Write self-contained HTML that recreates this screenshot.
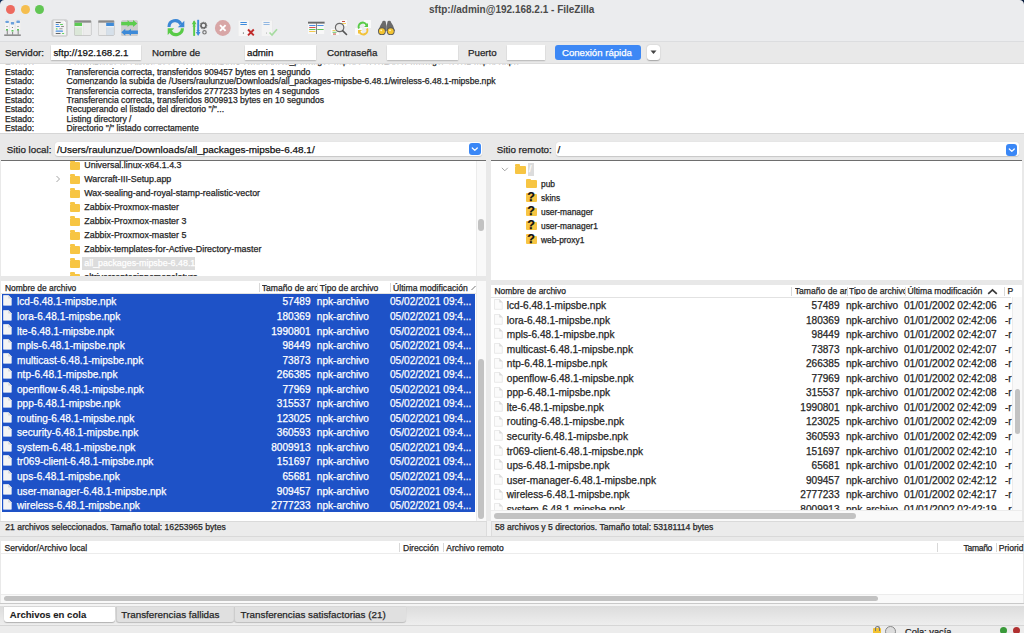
<!DOCTYPE html>
<html><head><meta charset="utf-8">
<style>
*{margin:0;padding:0;box-sizing:border-box}
html,body{width:1024px;height:633px;overflow:hidden;background:#e9e9e9;font-family:"Liberation Sans",sans-serif;color:#262626;position:relative}
div,span,svg{position:absolute}
.t{white-space:nowrap;line-height:1;-webkit-text-stroke:0.25px currentColor}
.w{background:#fff}
.tl{width:9px;height:9px;border-radius:50%;top:5px}
.inp{background:#fff;height:15px;top:45px;box-shadow:0 0.5px 1.2px rgba(0,0,0,.22)}
.lg{font-size:8.6px;line-height:9.45px;white-space:nowrap;-webkit-text-stroke:0.25px currentColor}
.tr{font-size:8.9px;white-space:nowrap;line-height:1;-webkit-text-stroke:0.25px currentColor}
.fold{width:11px;height:8px;background:#f7c543;border-radius:1px}
.fold:before{content:"";position:absolute;left:0;top:-1.5px;width:5px;height:2px;background:#f7c543;border-radius:1px 1px 0 0}
.hdr{font-size:8.6px;white-space:nowrap;line-height:1}
.hs{width:1px;height:9px;background:#d8d8d8}
.fl{font-size:10.1px;white-space:nowrap;line-height:1;-webkit-text-stroke:0.25px currentColor}
.fi{width:8px;height:10px}
.sel{color:#fff}
</style></head><body>

<div style="left:0;top:0;width:1024px;height:42px;background:#ebecee"></div>
<div style="left:0;top:41px;width:1024px;height:1px;background:#dcdddf"></div>
<svg style="left:0;top:0" width="6" height="6"><path d="M0 0 H4.5 A4.5 4.5 0 0 0 0 4.5 Z" fill="#12305a"/></svg>
<svg style="left:1018px;top:0" width="6" height="6"><path d="M6 0 H1.5 A4.5 4.5 0 0 1 6 4.5 Z" fill="#0a1e3e"/></svg>
<div class="tl" style="left:5.8px;top:4.8px;background:#ed6a5f"></div>
<div class="tl" style="left:20.5px;background:#f5be4f"></div>
<div class="tl" style="left:35px;background:#62c654"></div>
<div class="t" style="left:429px;top:5px;font-size:10px;font-weight:bold;color:#4a4a4a;-webkit-text-stroke:0">sftp://admin@192.168.2.1 - FileZilla</div>
<svg style="left:0;top:0" width="420" height="42" viewBox="0 0 420 42">
<defs>
<filter id="sh" x="-20%" y="-20%" width="140%" height="140%"><feGaussianBlur in="SourceAlpha" stdDeviation="0.6"/><feOffset dy="0.3"/><feComponentTransfer><feFuncA type="linear" slope="0.25"/></feComponentTransfer><feMerge><feMergeNode/><feMergeNode in="SourceGraphic"/></feMerge></filter>
</defs>
<!-- site manager -->
<g filter="url(#sh)">
<rect x="4.3" y="19.8" width="4.9" height="10.7" fill="#f4f4f4" rx="0.6"/>
<rect x="15.6" y="19.6" width="5.2" height="10.9" fill="#f4f4f4" rx="0.6"/>
<rect x="9.9" y="21.2" width="4.8" height="10.8" fill="#f6f6f6" rx="0.6"/>
</g>
<rect x="5.5" y="20.7" width="3.3" height="2.4" fill="#6aa0dc" rx="0.5"/>
<rect x="16.4" y="20.5" width="3.5" height="2.4" fill="#6aa0dc" rx="0.5"/>
<rect x="10.8" y="22" width="3.3" height="2.4" fill="#6aa0dc" rx="0.5"/>
<circle cx="7" cy="26.5" r="0.5" fill="#555"/><circle cx="12.4" cy="27.5" r="0.5" fill="#555"/><circle cx="18" cy="26.5" r="0.5" fill="#555"/>
<rect x="6" y="29" width="2" height="1.6" fill="#5cc45a"/><rect x="11.5" y="30" width="2" height="1.6" fill="#5cc45a"/><rect x="17" y="29" width="2" height="1.6" fill="#5cc45a"/>
<rect x="6.8" y="30.5" width="0.9" height="4" fill="#777"/><rect x="12.2" y="32" width="0.9" height="2.6" fill="#777"/><rect x="17.7" y="30.5" width="0.9" height="4" fill="#777"/>
<rect x="4.2" y="34.5" width="16.6" height="1.3" fill="#777"/>

<!-- message log doc -->
<g filter="url(#sh)"><rect x="51.6" y="19.4" width="16" height="17" rx="1.6" fill="#cfcfcf"/></g>
<path d="M53.5 20.6 H63.8 L66 22.8 V35.3 H53.5 Z" fill="#f3f3f3"/>
<path d="M63.6 20.6 L66 23 H63.6 Z" fill="#fff"/>
<rect x="55.6" y="21.9" width="5.2" height="1" rx="0.5" fill="#666"/>
<rect x="55.6" y="24" width="3.3" height="1" rx="0.5" fill="#4a90e2"/><rect x="60" y="24" width="3" height="1" rx="0.5" fill="#5cd05a"/>
<rect x="55.6" y="26.1" width="4.3" height="1" rx="0.5" fill="#4a90e2"/><rect x="61" y="26.1" width="3" height="1" rx="0.5" fill="#888"/>
<rect x="55.9" y="28.3" width="1.7" height="1.1" rx="0.5" fill="#5cd05a"/><rect x="59.2" y="28.3" width="3.5" height="1" rx="0.5" fill="#999"/>
<rect x="55.6" y="30.6" width="7.4" height="1.1" rx="0.5" fill="#4a90e2"/>
<rect x="55.6" y="32.9" width="5" height="1" rx="0.5" fill="#666"/><rect x="62" y="32.9" width="2.2" height="1" rx="0.5" fill="#5cd05a"/>

<!-- local tree -->
<g filter="url(#sh)"><rect x="74.1" y="20.2" width="17.3" height="15.5" rx="1.4" fill="#bdbdbd"/></g>
<rect x="74.6" y="20.6" width="16.3" height="2.1" fill="#8a8a8a"/>
<rect x="74.6" y="22.8" width="7.6" height="12.4" fill="#dbe7d8"/>
<rect x="74.6" y="22.8" width="7.6" height="3.2" fill="#5ccb52"/>
<rect x="74.6" y="26" width="7.6" height="1.4" fill="#eef3ee"/>
<rect x="82.2" y="22.8" width="0.9" height="12.4" fill="#fafafa"/>
<rect x="83.1" y="22.8" width="7.8" height="12.4" fill="#ececec"/>

<!-- remote tree -->
<g filter="url(#sh)"><rect x="98" y="20.2" width="16.4" height="15.5" rx="1.4" fill="#bdbdbd"/></g>
<rect x="98.5" y="20.6" width="15.4" height="2.1" fill="#8a8a8a"/>
<rect x="98.5" y="22.8" width="6.8" height="12.4" fill="#ececec"/>
<rect x="105.3" y="22.8" width="0.9" height="12.4" fill="#fafafa"/>
<rect x="106.2" y="22.8" width="7.7" height="12.4" fill="#d6e0ea"/>
<rect x="106.2" y="22.8" width="7.7" height="3.2" fill="#3f8bd8"/>
<rect x="106.2" y="26" width="7.7" height="1.4" fill="#eef1f4"/>

<!-- sync browse arrows -->
<g filter="url(#sh)"><rect x="121.2" y="20.2" width="16.6" height="15.8" rx="1.6" fill="#cdcdcd"/></g>
<rect x="121.2" y="21.9" width="13" height="3.4" fill="#5ccd4e"/>
<path d="M127.6 20.1 L131 23.6 L127.6 27.1 Z M133 20.1 L137.4 23.6 L133 27.1 Z" fill="#5ccd4e"/>
<rect x="125" y="30.5" width="12.9" height="3.5" fill="#3d8ad8"/>
<path d="M125.3 28.8 L121.3 32.25 L125.3 35.75 Z M131 28.8 L127 32.25 L131 35.75 Z" fill="#3d8ad8"/>
<!-- refresh -->
<path d="M169 27 A6.3 6.3 0 0 1 181 24.3" stroke="#3a87d6" stroke-width="3.1" fill="none"/>
<path d="M184.3 20.8 L184.3 27.3 L177.8 27.3 Z" fill="#3a87d6"/>
<path d="M182.4 28.3 A6.3 6.3 0 0 1 170.5 31.2" stroke="#59cb48" stroke-width="3.1" fill="none"/>
<path d="M167.7 35 L167.7 28.3 L174.2 28.3 Z" fill="#59cb48"/>

<!-- filter -->
<rect x="193.2" y="21.3" width="1.9" height="14.6" fill="#59cb48"/>
<path d="M191.8 24.2 L194.15 20.2 L196.5 24.2 Z" fill="#59cb48"/>
<path d="M192.3 26.4 L194.15 24.3 L196 26.4 Z" fill="#59cb48"/>
<rect x="197.2" y="19.8" width="1.9" height="14.4" fill="#3f8bdc"/>
<path d="M195.8 32 L198.15 36 L200.5 32 Z" fill="#3f8bdc"/>
<path d="M196.3 30 L198.15 32 L200 30 Z" fill="#3f8bdc"/>
<circle cx="203.5" cy="25.5" r="2.4" fill="none" stroke="#666" stroke-width="1.4"/>
<circle cx="203.5" cy="25.5" r="3.2" fill="none" stroke="#666" stroke-width="1.1" stroke-dasharray="0.9 0.7"/>
<circle cx="204.5" cy="32.3" r="1.7" fill="none" stroke="#777" stroke-width="1.2"/>

<!-- cancel -->
<circle cx="222.8" cy="28" r="7.9" fill="#d8a6a6"/>
<path d="M220 25.2 L225.6 30.8 M225.6 25.2 L220 30.8" stroke="#fff" stroke-width="1.9"/>

<!-- disconnect -->
<g filter="url(#sh)"><rect x="238.2" y="20.2" width="11.3" height="15.8" fill="#f7f7f7"/></g>
<rect x="240.2" y="22.1" width="6.8" height="0.9" rx="0.4" fill="#3d8bdc"/>
<rect x="240.2" y="24.1" width="6.8" height="0.9" rx="0.4" fill="#3d8bdc"/>
<circle cx="243.4" cy="33" r="0.6" fill="#333"/>
<path d="M248 29.5 L253.8 35.3 M253.8 29.5 L248 35.3" stroke="#c02a2a" stroke-width="1.9"/>

<!-- reconnect -->
<g filter="url(#sh)"><rect x="261.2" y="20.2" width="11.3" height="15.8" fill="#f4f4f4"/></g>
<rect x="263.3" y="22.1" width="6.5" height="0.8" rx="0.4" fill="#93b8e2"/>
<rect x="263.3" y="24.1" width="6.5" height="0.8" rx="0.4" fill="#93b8e2"/>
<circle cx="266.5" cy="33" r="0.5" fill="#999"/>
<path d="M269.5 32.5 L272 35 L277 29.2" stroke="#a6dba0" stroke-width="1.7" fill="none"/>

<!-- queue -->
<g filter="url(#sh)"><rect x="308" y="21.7" width="16.6" height="12.3" fill="#f8f8f8"/></g>
<rect x="308" y="21.7" width="16.6" height="1.9" fill="#6b6b6b"/>
<rect x="316" y="23.3" width="0.8" height="10.7" fill="#666"/>
<rect x="309.2" y="25" width="6.3" height="1" fill="#4a90e2"/><rect x="317.3" y="25" width="6.3" height="1" fill="#4a90e2"/>
<rect x="309.2" y="27" width="6.3" height="1" fill="#d9534f"/>
<rect x="309.2" y="29" width="6.3" height="1" fill="#5cc45a"/><rect x="317.3" y="29" width="6.3" height="1" fill="#5cc45a"/>
<rect x="309.2" y="31" width="6.3" height="1" fill="#f2c94c"/>

<!-- search -->
<g filter="url(#sh)"><rect x="339.5" y="19.5" width="8" height="6.5" fill="#fafafa"/><rect x="331" y="28.5" width="8" height="6.5" fill="#fafafa"/></g>
<rect x="342" y="21" width="3" height="0.9" fill="#c0392b"/><rect x="342" y="23" width="4" height="0.9" fill="#f2c94c"/>
<rect x="332.5" y="30" width="3" height="0.9" fill="#f2c94c"/><rect x="332.5" y="31.8" width="4" height="0.9" fill="#5cc45a"/><rect x="333" y="33.6" width="3" height="0.9" fill="#c0392b"/>
<circle cx="339.6" cy="27.5" r="4.2" fill="#e9e9e9" stroke="#6a6a6a" stroke-width="1.2"/>
<path d="M342.6 30.6 L346.5 34.5" stroke="#555" stroke-width="1.6" stroke-linecap="round"/>

<!-- sync browsing -->
<g filter="url(#sh)"><rect x="363.5" y="20" width="7.5" height="8" fill="#fafafa"/><rect x="355" y="28" width="7" height="7.5" fill="#fafafa"/></g>
<path d="M359 28.5 A4 4 0 0 1 366.5 25" stroke="#59cb48" stroke-width="2" fill="none"/>
<path d="M368 23 V27 H364 Z" fill="#59cb48"/>
<path d="M367 28.5 A4 4 0 0 1 359.5 32" stroke="#f2c23a" stroke-width="2" fill="none"/>
<path d="M358 34 V30 H362 Z" fill="#f2c23a"/>

<!-- binoculars -->
<path d="M382.2 22.2 Q382.2 20.8 384 20.8 Q385.8 20.8 385.8 22.2 L386.6 26.5 V31 H378.2 L380.3 25.5 Z" fill="#6a6a6a"/>
<path d="M387.4 22.2 Q387.4 20.8 389.2 20.8 Q391 20.8 391 22.2 L393 25.5 L395 31 H386.6 V26.5 Z" fill="#6a6a6a"/>
<circle cx="381.9" cy="31.2" r="3.9" fill="#5a5a5a"/><circle cx="390.7" cy="31.2" r="3.9" fill="#5a5a5a"/>
<circle cx="381.9" cy="31.2" r="3.0" fill="#f4c430"/><circle cx="390.7" cy="31.2" r="3.0" fill="#f4c430"/>
<circle cx="381.2" cy="30.3" r="0.9" fill="#fff6c8"/><circle cx="390" cy="30.3" r="0.9" fill="#fff6c8"/>
</svg>
<div style="left:0;top:63px;width:1024px;height:1px;background:#dcdcdc"></div>
<div class="t" style="left:5px;top:48px;font-size:9.75px;color:#262626;">Servidor:</div>
<div class="inp" style="left:51px;width:90px"></div>
<div class="t" style="left:53.5px;top:48px;font-size:9.7px;color:#111;">sftp://192.168.2.1</div>
<div class="t" style="left:152px;top:48px;font-size:9.75px;color:#262626;">Nombre de</div>
<div class="inp" style="left:245px;width:71px"></div>
<div class="t" style="left:247px;top:48px;font-size:9.7px;color:#111;">admin</div>
<div class="t" style="left:327px;top:48px;font-size:9.75px;color:#262626;">Contraseña</div>
<div class="inp" style="left:387px;width:71px"></div>
<div class="t" style="left:468px;top:48px;font-size:9.75px;color:#262626;">Puerto</div>
<div class="inp" style="left:507px;width:38px"></div>
<div style="left:555px;top:45px;width:86px;height:15px;background:#3d88f5;border-radius:3px"></div>
<div class="t" style="left:562px;top:48px;font-size:9.6px;color:#fff;">Conexión rápida</div>
<div style="left:647px;top:45px;width:13px;height:15px;background:#fff;border-radius:3px;box-shadow:0 0.5px 1.2px rgba(0,0,0,.3)"></div>
<svg style="left:650px;top:50px" width="7" height="5"><path d="M0.5 0.5 L6.5 0.5 L3.5 4 Z" fill="#444"/></svg>
<div class="w" style="left:0;top:64px;width:1024px;height:69px"></div>
<div style="left:0;top:64px;width:1024px;height:69px;overflow:hidden">
<div class="lg" style="left:5px;top:-7.25px;line-height:1">Estado:</div>
<div class="lg" style="left:66.5px;top:-7.25px;line-height:1">Comenzando la subida de /Users/raulunzue/Downloads/all_packages-mipsbe-6.48.1/user-manager-6.48.1-mipsbe.npk</div>
<div class="lg" style="left:5px;top:3.60px;line-height:1">Estado:</div>
<div class="lg" style="left:66.5px;top:3.60px;line-height:1">Transferencia correcta, transferidos 909457 bytes en 1 segundo</div>
<div class="lg" style="left:5px;top:13.05px;line-height:1">Estado:</div>
<div class="lg" style="left:66.5px;top:13.05px;line-height:1">Comenzando la subida de /Users/raulunzue/Downloads/all_packages-mipsbe-6.48.1/wireless-6.48.1-mipsbe.npk</div>
<div class="lg" style="left:5px;top:22.50px;line-height:1">Estado:</div>
<div class="lg" style="left:66.5px;top:22.50px;line-height:1">Transferencia correcta, transferidos 2777233 bytes en 4 segundos</div>
<div class="lg" style="left:5px;top:31.95px;line-height:1">Estado:</div>
<div class="lg" style="left:66.5px;top:31.95px;line-height:1">Transferencia correcta, transferidos 8009913 bytes en 10 segundos</div>
<div class="lg" style="left:5px;top:41.40px;line-height:1">Estado:</div>
<div class="lg" style="left:66.5px;top:41.40px;line-height:1">Recuperando el listado del directorio "/"...</div>
<div class="lg" style="left:5px;top:50.85px;line-height:1">Estado:</div>
<div class="lg" style="left:66.5px;top:50.85px;line-height:1">Listing directory /</div>
<div class="lg" style="left:5px;top:60.30px;line-height:1">Estado:</div>
<div class="lg" style="left:66.5px;top:60.30px;line-height:1">Directorio "/" listado correctamente</div>
</div>
<div style="left:0;top:133px;width:1024px;height:1px;background:#d6d6d6"></div>
<div class="t" style="left:6.8px;top:144.6px;font-size:9.8px;color:#262626;">Sitio local:</div>
<div style="left:55px;top:142.3px;width:427px;height:14px;background:#fff;border-radius:3px;box-shadow:0 0.5px 1px rgba(0,0,0,.15)"></div>
<div class="t" style="left:57px;top:144.6px;font-size:9.97px;color:#111;">/Users/raulunzue/Downloads/all_packages-mipsbe-6.48.1/</div>
<div style="left:469.4px;top:143px;width:11.6px;height:12.3px;background:#3a87f6;border-radius:3px"></div>
<svg style="left:469.4px;top:143px" width="12" height="12"><path d="M3.3 5 L5.8 7.4 L8.3 5" stroke="#fff" stroke-width="1.3" fill="none" stroke-linecap="round" stroke-linejoin="round"/></svg>
<div class="t" style="left:496.8px;top:144.6px;font-size:9.8px;color:#262626;">Sitio remoto:</div>
<div style="left:555.6px;top:142.3px;width:463px;height:14px;background:#fff;border-radius:3px;box-shadow:0 0.5px 1px rgba(0,0,0,.15)"></div>
<div class="t" style="left:557.5px;top:144.6px;font-size:9.97px;color:#111;">/</div>
<div style="left:1005.7px;top:143.8px;width:11.6px;height:12.3px;background:#3a87f6;border-radius:3px"></div>
<svg style="left:1005.7px;top:143.8px" width="12" height="12"><path d="M3.3 5 L5.8 7.4 L8.3 5" stroke="#fff" stroke-width="1.3" fill="none" stroke-linecap="round" stroke-linejoin="round"/></svg>
<div style="left:1px;top:160px;width:485px;height:1.2px;background:#6e6e6e"></div>
<div style="left:491px;top:160px;width:531px;height:1.2px;background:#6e6e6e"></div>
<div class="w" style="left:1px;top:161px;width:485px;height:115px"></div>
<div style="left:475.5px;top:161px;width:10.5px;height:115px;background:#f9f9f9;border-left:1px solid #ececec"></div>
<div style="left:478.2px;top:218.7px;width:5.8px;height:12.3px;background:#c2c2c2;border-radius:3px"></div>
<div style="left:1px;top:161px;width:474px;height:115px;overflow:hidden">
<div class="fold" style="left:68.5px;top:0.5px;width:10.5px"></div>
<div class="tr" style="left:83.3px;top:0.0px">Universal.linux-x64.1.4.3</div>
<div class="fold" style="left:68.5px;top:14.5px;width:10.5px"></div>
<div class="tr" style="left:83.3px;top:14.0px">Warcraft-III-Setup.app</div>
<svg style="left:54px;top:13.7px" width="6" height="8"><path d="M1.5 1 L4.5 4 L1.5 7" stroke="#9a9a9a" stroke-width="0.9" fill="none"/></svg>
<div class="fold" style="left:68.5px;top:28.5px;width:10.5px"></div>
<div class="tr" style="left:83.3px;top:28.0px">Wax-sealing-and-royal-stamp-realistic-vector</div>
<div class="fold" style="left:68.5px;top:42.5px;width:10.5px"></div>
<div class="tr" style="left:83.3px;top:42.0px">Zabbix-Proxmox-master</div>
<div class="fold" style="left:68.5px;top:56.5px;width:10.5px"></div>
<div class="tr" style="left:83.3px;top:56.0px">Zabbix-Proxmox-master 3</div>
<div class="fold" style="left:68.5px;top:70.5px;width:10.5px"></div>
<div class="tr" style="left:83.3px;top:70.0px">Zabbix-Proxmox-master 5</div>
<div class="fold" style="left:68.5px;top:84.5px;width:10.5px"></div>
<div class="tr" style="left:83.3px;top:84.0px">Zabbix-templates-for-Active-Directory-master</div>
<div class="fold" style="left:68.5px;top:98.5px;width:10.5px"></div>
<div style="left:80.7px;top:95.7px;width:113px;height:13.5px;background:#dcdcdc"></div>
<div class="tr" style="left:83.3px;top:98.0px;color:#fff">all_packages-mipsbe-6.48.1</div>
<div class="fold" style="left:68.5px;top:112.5px;width:10.5px"></div>
<div class="tr" style="left:83.3px;top:112.0px">altrivercentosinnomenclatura</div>
</div>
<div class="w" style="left:491px;top:161px;width:531px;height:119px"></div>
<svg style="left:500.5px;top:167px" width="8" height="5"><path d="M0.8 0.8 L3.8 3.8 L6.8 0.8" stroke="#9a9a9a" stroke-width="0.9" fill="none"/></svg>
<div class="fold" style="left:515px;top:165.6px"></div>
<div style="left:527.8px;top:163px;width:6.2px;height:13.3px;background:#dcdcdc"></div>
<div class="tr" style="left:529px;top:165px;color:#fff">/</div>
<div class="fold" style="left:526px;top:180.3px"></div>
<div class="tr" style="left:541px;top:180.2px;font-size:8.4px">pub</div>
<div class="fold" style="left:526px;top:194.2px"></div>
<div class="t" style="left:527.3px;top:191.1px;font-size:12.5px;font-weight:bold;color:#111">?</div>
<div class="tr" style="left:541px;top:194.1px;font-size:8.4px">skins</div>
<div class="fold" style="left:526px;top:208.1px"></div>
<div class="t" style="left:527.3px;top:205.0px;font-size:12.5px;font-weight:bold;color:#111">?</div>
<div class="tr" style="left:541px;top:208.0px;font-size:8.4px">user-manager</div>
<div class="fold" style="left:526px;top:222.0px"></div>
<div class="t" style="left:527.3px;top:218.9px;font-size:12.5px;font-weight:bold;color:#111">?</div>
<div class="tr" style="left:541px;top:221.9px;font-size:8.4px">user-manager1</div>
<div class="fold" style="left:526px;top:235.9px"></div>
<div class="t" style="left:527.3px;top:232.8px;font-size:12.5px;font-weight:bold;color:#111">?</div>
<div class="tr" style="left:541px;top:235.8px;font-size:8.4px">web-proxy1</div>
<div style="left:1px;top:276px;width:485px;height:5px;background:#e8e8e8"></div>
<div class="w" style="left:1px;top:281px;width:485px;height:240px"></div>
<div style="left:1px;top:292.6px;width:474.5px;height:0.8px;background:#e2e2e2"></div>
<div class="t" style="left:4.9px;top:284.2px;font-size:8.46px;color:#262626;">Nombre de archivo</div>
<div class="hs" style="left:258.9px;top:282.5px"></div>
<div class="hs" style="left:317.3px;top:282.5px"></div>
<div class="hs" style="left:390px;top:282.5px"></div>
<div class="t" style="left:261.7px;top:284.2px;width:55.5px;overflow:hidden;font-size:8.6px">Tamaño de arc</div>
<div class="t" style="left:319.8px;top:284.2px;font-size:8.62px;color:#262626;">Tipo de archivo</div>
<div class="t" style="left:393px;top:284.2px;font-size:8.65px;color:#262626;">Última modificación</div>
<svg style="left:470.5px;top:284.5px" width="5" height="6"><path d="M0.5 5 L4.5 1" stroke="#777" stroke-width="1" fill="none"/></svg>
<div style="left:475.5px;top:281px;width:10.5px;height:240px;background:#f9f9f9;border-left:1px solid #ececec"></div>
<div style="left:478px;top:359px;width:5.7px;height:160px;background:#c2c2c2;border-radius:3px"></div>
<div style="left:2px;top:293.5px;width:473px;height:218.3px;background:#1e52c7"></div>
<svg style="left:3.2px;top:295.09999999999997px" width="9" height="11"><path d="M0.5 0.5 H5.6 L8.3 3.2 V10.3 H0.5 Z" fill="#f4f4f4" stroke="#ffffff" stroke-width="0.6"/><path d="M5.6 0.5 V3.2 H8.3" fill="#ddd" stroke="#ccc" stroke-width="0.4"/></svg>
<div class="fl sel" style="left:17px;top:297.4px">lcd-6.48.1-mipsbe.npk</div>
<div class="fl sel" style="left:200px;width:110.5px;text-align:right;top:297.4px">57489</div>
<div class="fl sel" style="left:316.8px;top:297.4px">npk-archivo</div>
<div class="fl sel" style="left:390px;top:297.4px">05/02/2021 09:4...</div>
<svg style="left:3.2px;top:309.65px" width="9" height="11"><path d="M0.5 0.5 H5.6 L8.3 3.2 V10.3 H0.5 Z" fill="#f4f4f4" stroke="#ffffff" stroke-width="0.6"/><path d="M5.6 0.5 V3.2 H8.3" fill="#ddd" stroke="#ccc" stroke-width="0.4"/></svg>
<div class="fl sel" style="left:17px;top:311.9px">lora-6.48.1-mipsbe.npk</div>
<div class="fl sel" style="left:200px;width:110.5px;text-align:right;top:311.9px">180369</div>
<div class="fl sel" style="left:316.8px;top:311.9px">npk-archivo</div>
<div class="fl sel" style="left:390px;top:311.9px">05/02/2021 09:4...</div>
<svg style="left:3.2px;top:324.2px" width="9" height="11"><path d="M0.5 0.5 H5.6 L8.3 3.2 V10.3 H0.5 Z" fill="#f4f4f4" stroke="#ffffff" stroke-width="0.6"/><path d="M5.6 0.5 V3.2 H8.3" fill="#ddd" stroke="#ccc" stroke-width="0.4"/></svg>
<div class="fl sel" style="left:17px;top:326.5px">lte-6.48.1-mipsbe.npk</div>
<div class="fl sel" style="left:200px;width:110.5px;text-align:right;top:326.5px">1990801</div>
<div class="fl sel" style="left:316.8px;top:326.5px">npk-archivo</div>
<div class="fl sel" style="left:390px;top:326.5px">05/02/2021 09:4...</div>
<svg style="left:3.2px;top:338.75px" width="9" height="11"><path d="M0.5 0.5 H5.6 L8.3 3.2 V10.3 H0.5 Z" fill="#f4f4f4" stroke="#ffffff" stroke-width="0.6"/><path d="M5.6 0.5 V3.2 H8.3" fill="#ddd" stroke="#ccc" stroke-width="0.4"/></svg>
<div class="fl sel" style="left:17px;top:341.1px">mpls-6.48.1-mipsbe.npk</div>
<div class="fl sel" style="left:200px;width:110.5px;text-align:right;top:341.1px">98449</div>
<div class="fl sel" style="left:316.8px;top:341.1px">npk-archivo</div>
<div class="fl sel" style="left:390px;top:341.1px">05/02/2021 09:4...</div>
<svg style="left:3.2px;top:353.29999999999995px" width="9" height="11"><path d="M0.5 0.5 H5.6 L8.3 3.2 V10.3 H0.5 Z" fill="#f4f4f4" stroke="#ffffff" stroke-width="0.6"/><path d="M5.6 0.5 V3.2 H8.3" fill="#ddd" stroke="#ccc" stroke-width="0.4"/></svg>
<div class="fl sel" style="left:17px;top:355.6px">multicast-6.48.1-mipsbe.npk</div>
<div class="fl sel" style="left:200px;width:110.5px;text-align:right;top:355.6px">73873</div>
<div class="fl sel" style="left:316.8px;top:355.6px">npk-archivo</div>
<div class="fl sel" style="left:390px;top:355.6px">05/02/2021 09:4...</div>
<svg style="left:3.2px;top:367.84999999999997px" width="9" height="11"><path d="M0.5 0.5 H5.6 L8.3 3.2 V10.3 H0.5 Z" fill="#f4f4f4" stroke="#ffffff" stroke-width="0.6"/><path d="M5.6 0.5 V3.2 H8.3" fill="#ddd" stroke="#ccc" stroke-width="0.4"/></svg>
<div class="fl sel" style="left:17px;top:370.1px">ntp-6.48.1-mipsbe.npk</div>
<div class="fl sel" style="left:200px;width:110.5px;text-align:right;top:370.1px">266385</div>
<div class="fl sel" style="left:316.8px;top:370.1px">npk-archivo</div>
<div class="fl sel" style="left:390px;top:370.1px">05/02/2021 09:4...</div>
<svg style="left:3.2px;top:382.4px" width="9" height="11"><path d="M0.5 0.5 H5.6 L8.3 3.2 V10.3 H0.5 Z" fill="#f4f4f4" stroke="#ffffff" stroke-width="0.6"/><path d="M5.6 0.5 V3.2 H8.3" fill="#ddd" stroke="#ccc" stroke-width="0.4"/></svg>
<div class="fl sel" style="left:17px;top:384.7px">openflow-6.48.1-mipsbe.npk</div>
<div class="fl sel" style="left:200px;width:110.5px;text-align:right;top:384.7px">77969</div>
<div class="fl sel" style="left:316.8px;top:384.7px">npk-archivo</div>
<div class="fl sel" style="left:390px;top:384.7px">05/02/2021 09:4...</div>
<svg style="left:3.2px;top:396.95px" width="9" height="11"><path d="M0.5 0.5 H5.6 L8.3 3.2 V10.3 H0.5 Z" fill="#f4f4f4" stroke="#ffffff" stroke-width="0.6"/><path d="M5.6 0.5 V3.2 H8.3" fill="#ddd" stroke="#ccc" stroke-width="0.4"/></svg>
<div class="fl sel" style="left:17px;top:399.2px">ppp-6.48.1-mipsbe.npk</div>
<div class="fl sel" style="left:200px;width:110.5px;text-align:right;top:399.2px">315537</div>
<div class="fl sel" style="left:316.8px;top:399.2px">npk-archivo</div>
<div class="fl sel" style="left:390px;top:399.2px">05/02/2021 09:4...</div>
<svg style="left:3.2px;top:411.5px" width="9" height="11"><path d="M0.5 0.5 H5.6 L8.3 3.2 V10.3 H0.5 Z" fill="#f4f4f4" stroke="#ffffff" stroke-width="0.6"/><path d="M5.6 0.5 V3.2 H8.3" fill="#ddd" stroke="#ccc" stroke-width="0.4"/></svg>
<div class="fl sel" style="left:17px;top:413.8px">routing-6.48.1-mipsbe.npk</div>
<div class="fl sel" style="left:200px;width:110.5px;text-align:right;top:413.8px">123025</div>
<div class="fl sel" style="left:316.8px;top:413.8px">npk-archivo</div>
<div class="fl sel" style="left:390px;top:413.8px">05/02/2021 09:4...</div>
<svg style="left:3.2px;top:426.04999999999995px" width="9" height="11"><path d="M0.5 0.5 H5.6 L8.3 3.2 V10.3 H0.5 Z" fill="#f4f4f4" stroke="#ffffff" stroke-width="0.6"/><path d="M5.6 0.5 V3.2 H8.3" fill="#ddd" stroke="#ccc" stroke-width="0.4"/></svg>
<div class="fl sel" style="left:17px;top:428.3px">security-6.48.1-mipsbe.npk</div>
<div class="fl sel" style="left:200px;width:110.5px;text-align:right;top:428.3px">360593</div>
<div class="fl sel" style="left:316.8px;top:428.3px">npk-archivo</div>
<div class="fl sel" style="left:390px;top:428.3px">05/02/2021 09:4...</div>
<svg style="left:3.2px;top:440.59999999999997px" width="9" height="11"><path d="M0.5 0.5 H5.6 L8.3 3.2 V10.3 H0.5 Z" fill="#f4f4f4" stroke="#ffffff" stroke-width="0.6"/><path d="M5.6 0.5 V3.2 H8.3" fill="#ddd" stroke="#ccc" stroke-width="0.4"/></svg>
<div class="fl sel" style="left:17px;top:442.9px">system-6.48.1-mipsbe.npk</div>
<div class="fl sel" style="left:200px;width:110.5px;text-align:right;top:442.9px">8009913</div>
<div class="fl sel" style="left:316.8px;top:442.9px">npk-archivo</div>
<div class="fl sel" style="left:390px;top:442.9px">05/02/2021 09:4...</div>
<svg style="left:3.2px;top:455.15px" width="9" height="11"><path d="M0.5 0.5 H5.6 L8.3 3.2 V10.3 H0.5 Z" fill="#f4f4f4" stroke="#ffffff" stroke-width="0.6"/><path d="M5.6 0.5 V3.2 H8.3" fill="#ddd" stroke="#ccc" stroke-width="0.4"/></svg>
<div class="fl sel" style="left:17px;top:457.4px">tr069-client-6.48.1-mipsbe.npk</div>
<div class="fl sel" style="left:200px;width:110.5px;text-align:right;top:457.4px">151697</div>
<div class="fl sel" style="left:316.8px;top:457.4px">npk-archivo</div>
<div class="fl sel" style="left:390px;top:457.4px">05/02/2021 09:4...</div>
<svg style="left:3.2px;top:469.7px" width="9" height="11"><path d="M0.5 0.5 H5.6 L8.3 3.2 V10.3 H0.5 Z" fill="#f4f4f4" stroke="#ffffff" stroke-width="0.6"/><path d="M5.6 0.5 V3.2 H8.3" fill="#ddd" stroke="#ccc" stroke-width="0.4"/></svg>
<div class="fl sel" style="left:17px;top:472.0px">ups-6.48.1-mipsbe.npk</div>
<div class="fl sel" style="left:200px;width:110.5px;text-align:right;top:472.0px">65681</div>
<div class="fl sel" style="left:316.8px;top:472.0px">npk-archivo</div>
<div class="fl sel" style="left:390px;top:472.0px">05/02/2021 09:4...</div>
<svg style="left:3.2px;top:484.25px" width="9" height="11"><path d="M0.5 0.5 H5.6 L8.3 3.2 V10.3 H0.5 Z" fill="#f4f4f4" stroke="#ffffff" stroke-width="0.6"/><path d="M5.6 0.5 V3.2 H8.3" fill="#ddd" stroke="#ccc" stroke-width="0.4"/></svg>
<div class="fl sel" style="left:17px;top:486.6px">user-manager-6.48.1-mipsbe.npk</div>
<div class="fl sel" style="left:200px;width:110.5px;text-align:right;top:486.6px">909457</div>
<div class="fl sel" style="left:316.8px;top:486.6px">npk-archivo</div>
<div class="fl sel" style="left:390px;top:486.6px">05/02/2021 09:4...</div>
<svg style="left:3.2px;top:498.79999999999995px" width="9" height="11"><path d="M0.5 0.5 H5.6 L8.3 3.2 V10.3 H0.5 Z" fill="#f4f4f4" stroke="#ffffff" stroke-width="0.6"/><path d="M5.6 0.5 V3.2 H8.3" fill="#ddd" stroke="#ccc" stroke-width="0.4"/></svg>
<div class="fl sel" style="left:17px;top:501.1px">wireless-6.48.1-mipsbe.npk</div>
<div class="fl sel" style="left:200px;width:110.5px;text-align:right;top:501.1px">2777233</div>
<div class="fl sel" style="left:316.8px;top:501.1px">npk-archivo</div>
<div class="fl sel" style="left:390px;top:501.1px">05/02/2021 09:4...</div>
<div style="left:0;top:521px;width:487px;height:15px;background:#ebebeb;border-right:1px solid #dcdcdc"></div>
<div style="left:0;top:521px;width:487px;height:0.8px;background:#dadada"></div>
<div class="t" style="left:5.2px;top:522.5px;font-size:8.6px;color:#262626;">21 archivos seleccionados. Tamaño total: 16253965 bytes</div>
<div style="left:491px;top:280px;width:531px;height:5px;background:#e8e8e8"></div>
<div class="w" style="left:491px;top:285.3px;width:531px;height:235.7px"></div>
<div style="left:491px;top:296.5px;width:520px;height:0.8px;background:#e2e2e2"></div>
<div class="t" style="left:494.5px;top:286.7px;font-size:8.46px;color:#262626;">Nombre de archivo</div>
<div class="hs" style="left:791.4px;top:286.8px"></div>
<div class="hs" style="left:847.4px;top:286.8px"></div>
<div class="hs" style="left:905px;top:286.8px"></div>
<div class="hs" style="left:1004px;top:286.8px"></div>
<div class="t" style="left:794.8px;top:286.7px;width:52.5px;overflow:hidden;font-size:8.6px">Tamaño de ar</div>
<div class="t" style="left:849px;top:286.7px;width:55.5px;overflow:hidden;font-size:8.62px">Tipo de archivo</div>
<div class="t" style="left:907.5px;top:286.7px;font-size:8.65px;color:#262626;">Última modificación</div>
<svg style="left:987px;top:287.5px" width="11" height="7"><path d="M1.2 5.8 L5.5 1.8 L9.8 5.8" stroke="#3a3a3a" stroke-width="1.7" fill="none"/></svg>
<div class="t" style="left:1007.5px;top:286.7px;font-size:8.6px;color:#262626;">P</div>
<div style="left:491px;top:297.3px;width:520.8px;height:212.7px;overflow:hidden">
<svg style="left:3px;top:2.0999999999999996px" width="9" height="11"><path d="M0.5 0.5 H5.6 L8.3 3.2 V10.3 H0.5 Z" fill="#fbfbfb" stroke="#dddddd" stroke-width="0.6"/><path d="M5.6 0.5 V3.2 H8.3" fill="#ddd" stroke="#ccc" stroke-width="0.4"/></svg>
<div class="fl" style="left:15.8px;top:3.8px">lcd-6.48.1-mipsbe.npk</div>
<div class="fl" style="left:248px;width:100.6px;text-align:right;top:3.8px">57489</div>
<div class="fl" style="left:355px;top:3.8px">npk-archivo</div>
<div class="fl" style="left:413px;top:3.8px">01/01/2002 02:42:06</div>
<div class="fl" style="left:514px;top:3.8px">-r</div>
<svg style="left:3px;top:16.650000000000013px" width="9" height="11"><path d="M0.5 0.5 H5.6 L8.3 3.2 V10.3 H0.5 Z" fill="#fbfbfb" stroke="#dddddd" stroke-width="0.6"/><path d="M5.6 0.5 V3.2 H8.3" fill="#ddd" stroke="#ccc" stroke-width="0.4"/></svg>
<div class="fl" style="left:15.8px;top:18.4px">lora-6.48.1-mipsbe.npk</div>
<div class="fl" style="left:248px;width:100.6px;text-align:right;top:18.4px">180369</div>
<div class="fl" style="left:355px;top:18.4px">npk-archivo</div>
<div class="fl" style="left:413px;top:18.4px">01/01/2002 02:42:06</div>
<div class="fl" style="left:514px;top:18.4px">-r</div>
<svg style="left:3px;top:31.200000000000024px" width="9" height="11"><path d="M0.5 0.5 H5.6 L8.3 3.2 V10.3 H0.5 Z" fill="#fbfbfb" stroke="#dddddd" stroke-width="0.6"/><path d="M5.6 0.5 V3.2 H8.3" fill="#ddd" stroke="#ccc" stroke-width="0.4"/></svg>
<div class="fl" style="left:15.8px;top:32.9px">mpls-6.48.1-mipsbe.npk</div>
<div class="fl" style="left:248px;width:100.6px;text-align:right;top:32.9px">98449</div>
<div class="fl" style="left:355px;top:32.9px">npk-archivo</div>
<div class="fl" style="left:413px;top:32.9px">01/01/2002 02:42:07</div>
<div class="fl" style="left:514px;top:32.9px">-r</div>
<svg style="left:3px;top:45.750000000000036px" width="9" height="11"><path d="M0.5 0.5 H5.6 L8.3 3.2 V10.3 H0.5 Z" fill="#fbfbfb" stroke="#dddddd" stroke-width="0.6"/><path d="M5.6 0.5 V3.2 H8.3" fill="#ddd" stroke="#ccc" stroke-width="0.4"/></svg>
<div class="fl" style="left:15.8px;top:47.5px">multicast-6.48.1-mipsbe.npk</div>
<div class="fl" style="left:248px;width:100.6px;text-align:right;top:47.5px">73873</div>
<div class="fl" style="left:355px;top:47.5px">npk-archivo</div>
<div class="fl" style="left:413px;top:47.5px">01/01/2002 02:42:07</div>
<div class="fl" style="left:514px;top:47.5px">-r</div>
<svg style="left:3px;top:60.29999999999999px" width="9" height="11"><path d="M0.5 0.5 H5.6 L8.3 3.2 V10.3 H0.5 Z" fill="#fbfbfb" stroke="#dddddd" stroke-width="0.6"/><path d="M5.6 0.5 V3.2 H8.3" fill="#ddd" stroke="#ccc" stroke-width="0.4"/></svg>
<div class="fl" style="left:15.8px;top:62.0px">ntp-6.48.1-mipsbe.npk</div>
<div class="fl" style="left:248px;width:100.6px;text-align:right;top:62.0px">266385</div>
<div class="fl" style="left:355px;top:62.0px">npk-archivo</div>
<div class="fl" style="left:413px;top:62.0px">01/01/2002 02:42:08</div>
<div class="fl" style="left:514px;top:62.0px">-r</div>
<svg style="left:3px;top:74.85px" width="9" height="11"><path d="M0.5 0.5 H5.6 L8.3 3.2 V10.3 H0.5 Z" fill="#fbfbfb" stroke="#dddddd" stroke-width="0.6"/><path d="M5.6 0.5 V3.2 H8.3" fill="#ddd" stroke="#ccc" stroke-width="0.4"/></svg>
<div class="fl" style="left:15.8px;top:76.5px">openflow-6.48.1-mipsbe.npk</div>
<div class="fl" style="left:248px;width:100.6px;text-align:right;top:76.5px">77969</div>
<div class="fl" style="left:355px;top:76.5px">npk-archivo</div>
<div class="fl" style="left:413px;top:76.5px">01/01/2002 02:42:08</div>
<div class="fl" style="left:514px;top:76.5px">-r</div>
<svg style="left:3px;top:89.4px" width="9" height="11"><path d="M0.5 0.5 H5.6 L8.3 3.2 V10.3 H0.5 Z" fill="#fbfbfb" stroke="#dddddd" stroke-width="0.6"/><path d="M5.6 0.5 V3.2 H8.3" fill="#ddd" stroke="#ccc" stroke-width="0.4"/></svg>
<div class="fl" style="left:15.8px;top:91.1px">ppp-6.48.1-mipsbe.npk</div>
<div class="fl" style="left:248px;width:100.6px;text-align:right;top:91.1px">315537</div>
<div class="fl" style="left:355px;top:91.1px">npk-archivo</div>
<div class="fl" style="left:413px;top:91.1px">01/01/2002 02:42:08</div>
<div class="fl" style="left:514px;top:91.1px">-r</div>
<svg style="left:3px;top:103.95000000000002px" width="9" height="11"><path d="M0.5 0.5 H5.6 L8.3 3.2 V10.3 H0.5 Z" fill="#fbfbfb" stroke="#dddddd" stroke-width="0.6"/><path d="M5.6 0.5 V3.2 H8.3" fill="#ddd" stroke="#ccc" stroke-width="0.4"/></svg>
<div class="fl" style="left:15.8px;top:105.7px">lte-6.48.1-mipsbe.npk</div>
<div class="fl" style="left:248px;width:100.6px;text-align:right;top:105.7px">1990801</div>
<div class="fl" style="left:355px;top:105.7px">npk-archivo</div>
<div class="fl" style="left:413px;top:105.7px">01/01/2002 02:42:09</div>
<div class="fl" style="left:514px;top:105.7px">-r</div>
<svg style="left:3px;top:118.50000000000003px" width="9" height="11"><path d="M0.5 0.5 H5.6 L8.3 3.2 V10.3 H0.5 Z" fill="#fbfbfb" stroke="#dddddd" stroke-width="0.6"/><path d="M5.6 0.5 V3.2 H8.3" fill="#ddd" stroke="#ccc" stroke-width="0.4"/></svg>
<div class="fl" style="left:15.8px;top:120.2px">routing-6.48.1-mipsbe.npk</div>
<div class="fl" style="left:248px;width:100.6px;text-align:right;top:120.2px">123025</div>
<div class="fl" style="left:355px;top:120.2px">npk-archivo</div>
<div class="fl" style="left:413px;top:120.2px">01/01/2002 02:42:09</div>
<div class="fl" style="left:514px;top:120.2px">-r</div>
<svg style="left:3px;top:133.04999999999998px" width="9" height="11"><path d="M0.5 0.5 H5.6 L8.3 3.2 V10.3 H0.5 Z" fill="#fbfbfb" stroke="#dddddd" stroke-width="0.6"/><path d="M5.6 0.5 V3.2 H8.3" fill="#ddd" stroke="#ccc" stroke-width="0.4"/></svg>
<div class="fl" style="left:15.8px;top:134.7px">security-6.48.1-mipsbe.npk</div>
<div class="fl" style="left:248px;width:100.6px;text-align:right;top:134.7px">360593</div>
<div class="fl" style="left:355px;top:134.7px">npk-archivo</div>
<div class="fl" style="left:413px;top:134.7px">01/01/2002 02:42:09</div>
<div class="fl" style="left:514px;top:134.7px">-r</div>
<svg style="left:3px;top:147.6px" width="9" height="11"><path d="M0.5 0.5 H5.6 L8.3 3.2 V10.3 H0.5 Z" fill="#fbfbfb" stroke="#dddddd" stroke-width="0.6"/><path d="M5.6 0.5 V3.2 H8.3" fill="#ddd" stroke="#ccc" stroke-width="0.4"/></svg>
<div class="fl" style="left:15.8px;top:149.3px">tr069-client-6.48.1-mipsbe.npk</div>
<div class="fl" style="left:248px;width:100.6px;text-align:right;top:149.3px">151697</div>
<div class="fl" style="left:355px;top:149.3px">npk-archivo</div>
<div class="fl" style="left:413px;top:149.3px">01/01/2002 02:42:10</div>
<div class="fl" style="left:514px;top:149.3px">-r</div>
<svg style="left:3px;top:162.15px" width="9" height="11"><path d="M0.5 0.5 H5.6 L8.3 3.2 V10.3 H0.5 Z" fill="#fbfbfb" stroke="#dddddd" stroke-width="0.6"/><path d="M5.6 0.5 V3.2 H8.3" fill="#ddd" stroke="#ccc" stroke-width="0.4"/></svg>
<div class="fl" style="left:15.8px;top:163.8px">ups-6.48.1-mipsbe.npk</div>
<div class="fl" style="left:248px;width:100.6px;text-align:right;top:163.8px">65681</div>
<div class="fl" style="left:355px;top:163.8px">npk-archivo</div>
<div class="fl" style="left:413px;top:163.8px">01/01/2002 02:42:10</div>
<div class="fl" style="left:514px;top:163.8px">-r</div>
<svg style="left:3px;top:176.70000000000002px" width="9" height="11"><path d="M0.5 0.5 H5.6 L8.3 3.2 V10.3 H0.5 Z" fill="#fbfbfb" stroke="#dddddd" stroke-width="0.6"/><path d="M5.6 0.5 V3.2 H8.3" fill="#ddd" stroke="#ccc" stroke-width="0.4"/></svg>
<div class="fl" style="left:15.8px;top:178.4px">user-manager-6.48.1-mipsbe.npk</div>
<div class="fl" style="left:248px;width:100.6px;text-align:right;top:178.4px">909457</div>
<div class="fl" style="left:355px;top:178.4px">npk-archivo</div>
<div class="fl" style="left:413px;top:178.4px">01/01/2002 02:42:12</div>
<div class="fl" style="left:514px;top:178.4px">-r</div>
<svg style="left:3px;top:191.25000000000003px" width="9" height="11"><path d="M0.5 0.5 H5.6 L8.3 3.2 V10.3 H0.5 Z" fill="#fbfbfb" stroke="#dddddd" stroke-width="0.6"/><path d="M5.6 0.5 V3.2 H8.3" fill="#ddd" stroke="#ccc" stroke-width="0.4"/></svg>
<div class="fl" style="left:15.8px;top:193.0px">wireless-6.48.1-mipsbe.npk</div>
<div class="fl" style="left:248px;width:100.6px;text-align:right;top:193.0px">2777233</div>
<div class="fl" style="left:355px;top:193.0px">npk-archivo</div>
<div class="fl" style="left:413px;top:193.0px">01/01/2002 02:42:17</div>
<div class="fl" style="left:514px;top:193.0px">-r</div>
<svg style="left:3px;top:205.79999999999998px" width="9" height="11"><path d="M0.5 0.5 H5.6 L8.3 3.2 V10.3 H0.5 Z" fill="#fbfbfb" stroke="#dddddd" stroke-width="0.6"/><path d="M5.6 0.5 V3.2 H8.3" fill="#ddd" stroke="#ccc" stroke-width="0.4"/></svg>
<div class="fl" style="left:15.8px;top:207.5px">system-6.48.1-mipsbe.npk</div>
<div class="fl" style="left:248px;width:100.6px;text-align:right;top:207.5px">8009913</div>
<div class="fl" style="left:355px;top:207.5px">npk-archivo</div>
<div class="fl" style="left:413px;top:207.5px">01/01/2002 02:42:19</div>
<div class="fl" style="left:514px;top:207.5px">-r</div>
</div>
<div style="left:1011.8px;top:297.3px;width:10.2px;height:212.7px;background:#f9f9f9;border-left:1px solid #ececec"></div>
<div style="left:1014.5px;top:388.8px;width:5.5px;height:45.7px;background:#c2c2c2;border-radius:3px"></div>
<div style="left:491px;top:510px;width:531px;height:11px;background:#f9f9f9;border-top:1px solid #ececec"></div>
<div style="left:493.6px;top:512.9px;width:362px;height:6px;background:#c2c2c2;border-radius:3px"></div>
<div style="left:487px;top:521px;width:3.5px;height:15px;background:#f2f2f2"></div>
<div style="left:490.5px;top:521px;width:533.5px;height:15px;background:#ebebeb;border-left:1px solid #dcdcdc"></div>
<div style="left:490.5px;top:521px;width:533.5px;height:0.8px;background:#dadada"></div>
<div class="t" style="left:495px;top:522.5px;font-size:8.6px;color:#262626;">58 archivos y 5 directorios. Tamaño total: 53181114 bytes</div>
<div style="left:0;top:536px;width:1024px;height:1px;background:#d9d9d9"></div>
<div class="w" style="left:1px;top:540.8px;width:1021.5px;height:62.6px"></div>
<div style="left:1px;top:553px;width:1021.5px;height:0.8px;background:#ececec"></div>
<div class="t" style="left:4.6px;top:543.8px;font-size:8.56px;color:#262626;">Servidor/Archivo local</div>
<div class="hs" style="left:399.1px;top:542.5px"></div>
<div class="hs" style="left:442.9px;top:542.5px"></div>
<div class="hs" style="left:937px;top:542.5px"></div>
<div class="hs" style="left:995.7px;top:542.5px"></div>
<div class="t" style="left:403px;top:543.8px;font-size:8.59px;color:#262626;">Dirección</div>
<div class="t" style="left:446.3px;top:543.8px;font-size:8.54px;color:#262626;">Archivo remoto</div>
<div class="t" style="left:942px;width:50px;text-align:right;top:543.8px;font-size:8.5px;letter-spacing:-0.3px">Tamaño</div>
<div class="t" style="left:998.7px;top:543.8px;font-size:8.6px;color:#262626;">Priorid</div>
<div style="left:1px;top:593.5px;width:1021.5px;height:10px;background:#f9f9f9;border-top:1px solid #ececec"></div>
<div style="left:4px;top:595.8px;width:874px;height:5.6px;background:#c2c2c2;border-radius:3px"></div>
<div style="left:0;top:603.4px;width:1024px;height:1px;background:#c9c9c9"></div>
<div style="left:0;top:604.4px;width:1024px;height:21px;background:linear-gradient(#f4f4f4 0,#f4f4f4 1.5px,#dcdcdc 2px,#eeeeee 100%)"></div>
<div style="left:4px;top:607.3px;width:110.7px;height:15.1px;background:#fff;border-radius:0 0 3px 3px;box-shadow:0 0.5px 1px rgba(0,0,0,.25)"></div>
<div style="left:115.6px;top:607.3px;width:118.8px;height:15px;background:#e0e0e0;border-left:1px solid #cdcdcd;border-radius:0 0 3px 3px;box-shadow:0 0.5px 1px rgba(0,0,0,.2)"></div>
<div style="left:234.4px;top:607.3px;width:171.6px;height:15px;background:#e0e0e0;border-left:1px solid #cdcdcd;border-radius:0 0 3px 3px;box-shadow:0 0.5px 1px rgba(0,0,0,.2)"></div>
<div class="t" style="left:9.8px;top:610px;font-size:9.56px;color:#1a1a1a;font-weight:bold;-webkit-text-stroke:0.1px #1a1a1a">Archivos en cola</div>
<div class="t" style="left:121.25px;top:610px;font-size:9.87px;color:#262626;">Transferencias fallidas</div>
<div class="t" style="left:240.6px;top:610px;font-size:9.86px;color:#262626;">Transferencias satisfactorias (21)</div>
<div style="left:0;top:625px;width:1024px;height:8px;background:#ececec;border-top:1px solid #d6d6d6"></div>
<div class="t" style="left:905px;top:627.5px;font-size:9.3px;color:#262626;">Cola: vacía</div>
<div style="left:873px;top:628px;width:8px;height:6px;background:#f2c231;border-radius:1px"></div>
<div style="left:874.5px;top:625.8px;width:5px;height:5px;border:1.2px solid #777;border-bottom:none;border-radius:3px 3px 0 0"></div>
<div style="left:885px;top:626.4px;width:11px;height:11px;border-radius:50%;background:#ddd;border:1.2px solid #888"></div>
<div style="left:1000px;top:627px;width:7px;height:7px;border-radius:50%;background:#3a9a3a"></div>
<div style="left:1013px;top:627px;width:7px;height:7px;border-radius:50%;background:#b03030"></div>
</body></html>
